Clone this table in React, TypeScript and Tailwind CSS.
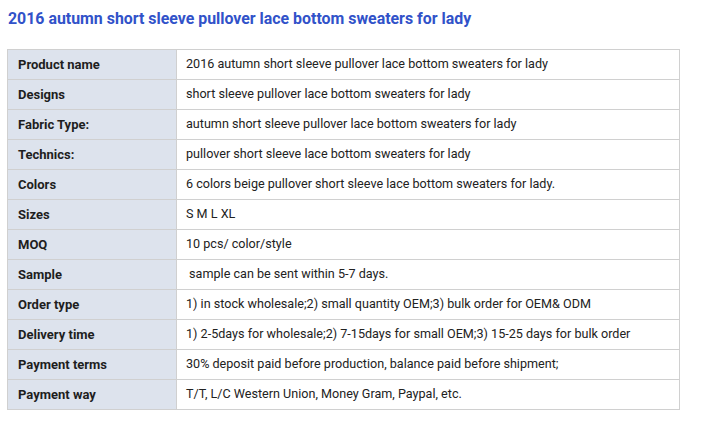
import React from "react";

const rows: [string, string][] = [
  ["Product name", "2016 autumn short sleeve pullover lace bottom sweaters for lady"],
  ["Designs", "short sleeve pullover lace bottom sweaters for lady"],
  ["Fabric Type:", "autumn short sleeve pullover lace bottom sweaters for lady"],
  ["Technics:", "pullover short sleeve lace bottom sweaters for lady"],
  ["Colors", "6 colors beige pullover short sleeve lace bottom sweaters for lady."],
  ["Sizes", "S M L XL"],
  ["MOQ", "10 pcs/ color/style"],
  ["Sample", "\u00a0sample can be sent within 5-7 days."],
  ["Order type", "1) in stock wholesale;2) small quantity OEM;3) bulk order for OEM& ODM"],
  ["Delivery time", "1) 2-5days for wholesale;2) 7-15days for small OEM;3) 15-25 days for bulk order"],
  ["Payment terms", "30% deposit paid before production, balance paid before shipment;"],
  ["Payment way", "T/T, L/C Western Union, Money Gram, Paypal, etc."],
];

export default function App() {
  return (
    <div className="w-[701px] h-[423px] bg-white font-['Roboto',sans-serif] text-[#222]">
      <h1 className="pl-[8px] pt-[9px] text-[15.9px] leading-[20px] font-bold text-[#3152c9]">
        2016 autumn short sleeve pullover lace bottom sweaters for lady
      </h1>
      <table className="ml-[7px] mt-[20px] w-[673px] border-collapse text-[13px]">
        <tbody>
          {rows.map(([k, v]) => (
            <tr key={k} className="h-[30px]">
              <td className="w-[169px] border border-[#d0d0d0] bg-[#dde3ed] pl-[10px] font-bold text-[#1e1e1e]">
                {k}
              </td>
              <td className="border border-[#d0d0d0] pl-[9px] text-[12.6px] text-[#222] whitespace-pre">{v}</td>
            </tr>
          ))}
        </tbody>
      </table>
    </div>
  );
}
